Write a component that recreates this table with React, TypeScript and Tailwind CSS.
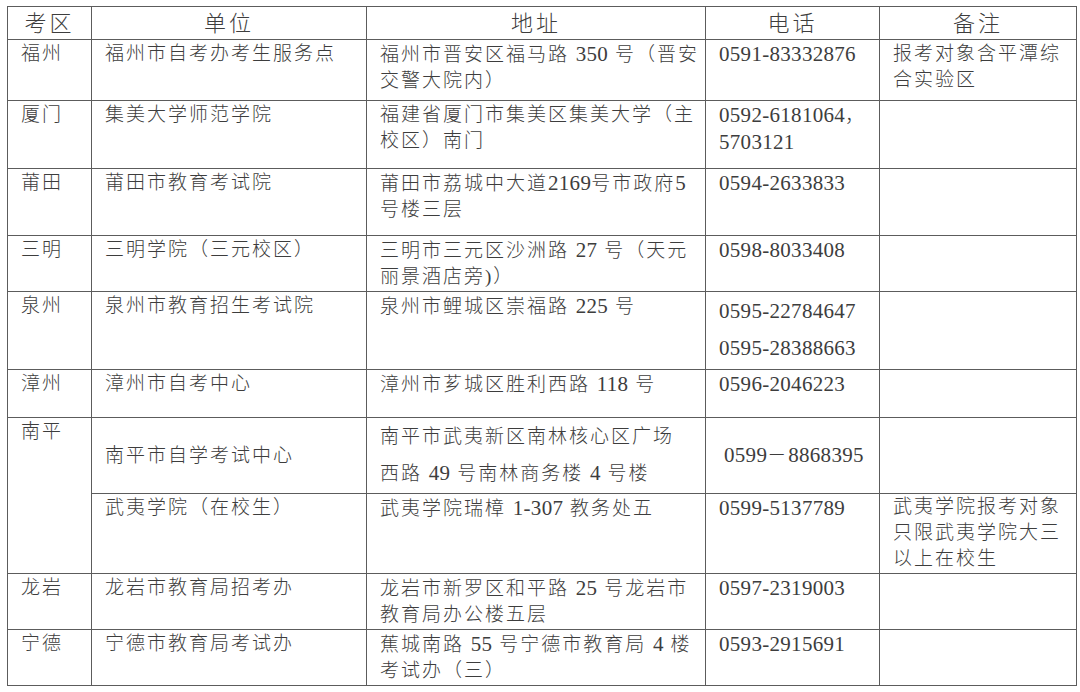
import { Fragment, ReactNode } from 'react';

// digits and latin runs use the serif face at a slightly bigger size
const T = ({ s }: { s: string }) => {
  const parts = s.split(/([0-9][0-9\-]*[0-9]|[0-9])/);
  return (
    <>
      {parts.map((p, i) =>
        /^[0-9]/.test(p) ? (
          <span key={i} className="text-[21px] tracking-[0.3px]">
            {p}
          </span>
        ) : (
          <Fragment key={i}>{p}</Fragment>
        ),
      )}
    </>
  );
};

const Lines = ({ lines, lh = 'leading-[26px]' }: { lines: string[]; lh?: string }) => (
  <div className={lh}>
    {lines.map((l, i) => (
      <div key={i} className="whitespace-nowrap">
        <T s={l} />
      </div>
    ))}
  </div>
);

type Row = {
  h: string;
  area: string;
  unit: string;
  addr: string[];
  phone: string[];
  phoneLh?: string;
  note?: string[];
};

const rows: Row[] = [
  {
    h: 'h-[61px]',
    area: '福州',
    unit: '福州市自考办考生服务点',
    addr: ['福州市晋安区福马路 350 号（晋安', '交警大院内）'],
    phone: ['0591-83332876'],
    note: ['报考对象含平潭综', '合实验区'],
  },
  {
    h: 'h-[68px]',
    area: '厦门',
    unit: '集美大学师范学院',
    addr: ['福建省厦门市集美区集美大学（主', '校区）南门'],
    phone: ['0592-6181064，', '5703121'],
  },
  {
    h: 'h-[67px]',
    area: '莆田',
    unit: '莆田市教育考试院',
    addr: ['莆田市荔城中大道2169号市政府5', '号楼三层'],
    phone: ['0594-2633833'],
  },
  {
    h: 'h-[56px]',
    area: '三明',
    unit: '三明学院（三元校区）',
    addr: ['三明市三元区沙洲路 27 号（天元', '丽景酒店旁)）'],
    phone: ['0598-8033408'],
  },
  {
    h: 'h-[78px]',
    area: '泉州',
    unit: '泉州市教育招生考试院',
    addr: ['泉州市鲤城区崇福路 225 号'],
    phone: ['0595-22784647', '0595-28388663'],
    phoneLh: 'leading-[37px]',
  },
  {
    h: 'h-[48px]',
    area: '漳州',
    unit: '漳州市自考中心',
    addr: ['漳州市芗城区胜利西路 118 号'],
    phone: ['0596-2046223'],
  },
];

const tail: Row[] = [
  {
    h: 'h-[56px]',
    area: '龙岩',
    unit: '龙岩市教育局招考办',
    addr: ['龙岩市新罗区和平路 25 号龙岩市', '教育局办公楼五层'],
    phone: ['0597-2319003'],
  },
  {
    h: 'h-[56px]',
    area: '宁德',
    unit: '宁德市教育局考试办',
    addr: ['蕉城南路 55 号宁德市教育局 4 楼', '考试办（三）'],
    phone: ['0593-2915691'],
  },
];

const td = 'border border-[#5c5c5c] px-[13px] pt-[1px] pb-0 align-top';
const th = 'border border-[#5c5c5c] p-0 text-center align-middle text-[22px] leading-[31px] tracking-[3px] font-light';

const Cell = ({
  children,
  className = '',
  rowSpan,
}: {
  children?: ReactNode;
  className?: string;
  rowSpan?: number;
}) => (
  <td rowSpan={rowSpan} className={`${td} ${className}`}>
    {children}
  </td>
);

const BodyRow = ({ r }: { r: Row }) => (
  <tr className={r.h}>
    <Cell>
      <Lines lines={[r.area]} />
    </Cell>
    <Cell>
      <Lines lines={[r.unit]} />
    </Cell>
    <Cell>
      <Lines lines={r.addr} />
    </Cell>
    <Cell>
      <Lines lines={r.phone} lh={r.phoneLh} />
    </Cell>
    <Cell>{r.note ? <Lines lines={r.note} /> : null}</Cell>
  </tr>
);

export default function App() {
  return (
    <div className="h-[692px] w-[1080px] overflow-hidden bg-white pl-[7px] pt-[6px] text-[#3d3d3d] font-light font-['Liberation_Serif','Noto_Sans_CJK_SC',serif] text-[19px] tracking-[2px]">
      <table className="w-[1069px] table-fixed border-collapse">
        <colgroup>
          <col className="w-[84px]" />
          <col className="w-[275px]" />
          <col className="w-[339px]" />
          <col className="w-[174px]" />
          <col className="w-[197px]" />
        </colgroup>
        <thead>
          <tr className="h-[33px]">
            <th className={th}>考区</th>
            <th className={th}>单位</th>
            <th className={th}>地址</th>
            <th className={th}>电话</th>
            <th className={th}>备注</th>
          </tr>
        </thead>
        <tbody>
          {rows.map((r, i) => (
            <BodyRow key={i} r={r} />
          ))}
          <tr className="h-[76px]">
            <Cell rowSpan={2}>
              <Lines lines={['南平']} />
            </Cell>
            <Cell className="!align-middle !pt-0">
              <Lines lines={['南平市自学考试中心']} />
            </Cell>
            <Cell className="!align-middle !pt-0">
              <Lines lines={['南平市武夷新区南林核心区广场', '西路 49 号南林商务楼 4 号楼']} lh="leading-[36px]" />
            </Cell>
            <Cell className="!align-middle !pt-0">
              <div className="whitespace-nowrap pl-[5px] leading-[27px]">
                <T s="0599－8868395" />
              </div>
            </Cell>
            <Cell />
          </tr>
          <tr className="h-[80px]">
            <Cell>
              <Lines lines={['武夷学院（在校生）']} />
            </Cell>
            <Cell>
              <Lines lines={['武夷学院瑞樟 1-307 教务处五']} />
            </Cell>
            <Cell>
              <Lines lines={['0599-5137789']} />
            </Cell>
            <Cell className="!pt-0">
              <Lines lines={['武夷学院报考对象', '只限武夷学院大三', '以上在校生']} />
            </Cell>
          </tr>
          {tail.map((r, i) => (
            <BodyRow key={i} r={r} />
          ))}
        </tbody>
      </table>
    </div>
  );
}
